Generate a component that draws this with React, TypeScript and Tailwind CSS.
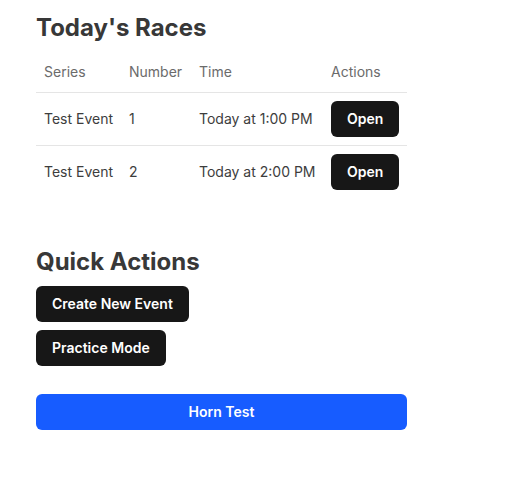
import React from "react";

const RACES = [
  { series: "Test Event", number: 1, time: "Today at 1:00 PM" },
  { series: "Test Event", number: 2, time: "Today at 2:00 PM" },
];

export default function App() {
  return (
    <div className="min-h-screen bg-white pl-9 pt-3 text-[#3d3d3d]" style={{ fontFamily: "Inter, 'Noto Sans', sans-serif" }}>
      <div className="w-[371px]">
        <h1 className="text-2xl font-bold leading-8 text-[#383838]">Today's Races</h1>
        <table className="mt-2 w-full table-fixed border-collapse text-sm">
          <colgroup>
            <col className="w-[85px]" />
            <col className="w-[70px]" />
            <col className="w-[132px]" />
            <col className="w-[84px]" />
          </colgroup>
          <thead>
            <tr className="border-b border-[#e5e5e5] text-left text-[#6b6b6b]">
              <th className="px-2 py-2.5 font-normal">Series</th>
              <th className="px-2 py-2.5 font-normal">Number</th>
              <th className="px-2 py-2.5 font-normal">Time</th>
              <th className="px-2 py-2.5 font-normal">Actions</th>
            </tr>
          </thead>
          <tbody>
            {RACES.map((r) => (
              <tr key={r.number} className="border-b border-[#e5e5e5] last:border-b-0">
                <td className="whitespace-nowrap px-2 py-2">{r.series}</td>
                <td className="px-2 py-2">{r.number}</td>
                <td className="whitespace-nowrap px-2 py-2">{r.time}</td>
                <td className="px-2 py-2">
                  <button className="h-9 rounded-md bg-[#171717] px-4 text-sm font-semibold text-white">Open</button>
                </td>
              </tr>
            ))}
          </tbody>
        </table>

        <h2 className="mt-12 text-2xl font-bold leading-8 text-[#383838]">Quick Actions</h2>
        <div className="mt-2 flex flex-col items-start gap-2">
          <button className="h-9 rounded-md bg-[#171717] px-4 text-sm font-semibold text-white">Create New Event</button>
          <button className="h-9 rounded-md bg-[#171717] px-4 text-sm font-semibold text-white">Practice Mode</button>
        </div>
        <button className="mt-7 h-9 w-full rounded-md bg-[#175cff] text-sm font-semibold text-white">Horn Test</button>
      </div>
    </div>
  );
}
